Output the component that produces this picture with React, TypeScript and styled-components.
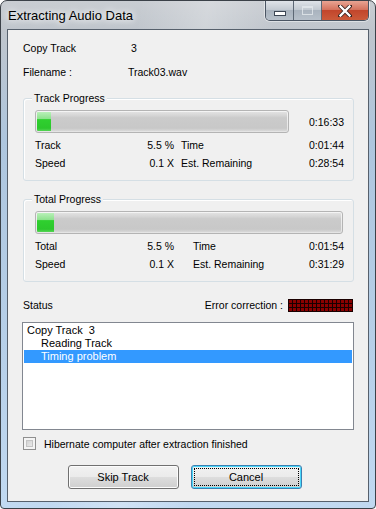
import styled, { createGlobalStyle } from "styled-components";

const GlobalStyle = createGlobalStyle`
  html, body {
    margin: 0;
    padding: 0;
    background: #ffffff;
  }
  body {
    font-family: "Liberation Sans", Arial, sans-serif;
  }
`;

const Window = styled.div`
  width: 376px;
  height: 509px;
  box-sizing: border-box;
  display: flex;
  flex-direction: column;
  border: 1px solid #3b4148;
  border-radius: 7px 7px 4px 4px;
  overflow: hidden;
  background:
    linear-gradient(100deg, rgba(255,255,255,0.0) 30%, rgba(255,255,255,0.25) 45%, rgba(255,255,255,0) 60%),
    linear-gradient(to bottom, #c9cdd2 0px, #bfc5cc 30px, #aec6de 140px, #b7d0e9 360px, #c1d9f1 100%);
`;

const TitleBar = styled.div`
  height: 29px;
  display: flex;
  align-items: flex-start;
  justify-content: space-between;
  padding-left: 7px;
`;

const Title = styled.div`
  font-family: "Liberation Sans", Arial, sans-serif;
  font-size: 13px;
  line-height: 15px;
  margin-top: 7px;
  color: #000;
  text-shadow: 0 0 6px #ffffff, 0 0 10px rgba(255,255,255,0.9);
`;

const Caption = styled.div`
  display: flex;
  margin-right: 6px;
  border: 1px solid #4a5563;
  border-top: none;
  border-radius: 0 0 5px 5px;
  overflow: hidden;
  height: 19px;
  box-shadow: 0 0 0 1px rgba(255,255,255,0.45);
`;

const CaptionButton = styled.div<{ $w: number; $close?: boolean }>`
  width: ${(p) => p.$w}px;
  height: 19px;
  display: flex;
  align-items: center;
  justify-content: center;
  border-left: 1px solid #5c6774;
  &:first-child { border-left: none; }
  background: ${(p) =>
    p.$close
      ? "linear-gradient(to bottom, #e8a493 0%, #d4735e 45%, #c2462c 50%, #cb5a3a 100%)"
      : "linear-gradient(to bottom, #dfe3e8 0%, #c3cad2 45%, #a9b3be 50%, #b7c0ca 100%)"};
`;

const MinGlyph = styled.div`
  width: 10px;
  height: 3px;
  margin-top: 6px;
  background: #fff;
  border: 1px solid #3c4654;
`;

const MaxGlyph = styled.div`
  width: 9px;
  height: 6px;
  border: 1px solid #e4e8ec;
  border-top-width: 2px;
  opacity: 0.8;
`;

const Client = styled.div`
  flex: 1;
  margin: 0 6px 6px 6px;
  border: 1px solid #56606c;
  background: #f0f0f0;
  padding: 6px 14px 12px 15px;
  display: flex;
  flex-direction: column;
  font-size: 10.5px;
  color: #000;
`;

const InfoRow = styled.div`
  height: 24px;
  display: flex;
  align-items: center;
`;

const InfoLabel = styled.div`
  width: 105px;
`;

const Group = styled.div<{ $top: number }>`
  position: relative;
  margin-top: ${(p) => p.$top}px;
  border: 1px solid #d5dfe5;
  border-radius: 3px;
  padding: 11px 9px 8px 11px;
  box-shadow: inset 1px 1px 0 #ffffff;
`;

const Legend = styled.div`
  position: absolute;
  top: -7px;
  left: 8px;
  padding: 0 2px;
  background: #f0f0f0;
  line-height: 13px;
`;

const BarRow = styled.div`
  display: flex;
  align-items: center;
  justify-content: space-between;
`;

const Bar = styled.div<{ $w?: number }>`
  box-sizing: border-box;
  ${(p) => (p.$w ? `width: ${p.$w}px;` : "flex: 1; margin-right: 1px;")}
  height: 23px;
  border: 1px solid #b4b4b4;
  border-radius: 3px;
  padding: 1px;
  background: linear-gradient(to bottom, #f4f4f4 0%, #e4e4e4 100%);
`;

const BarTrack = styled.div`
  height: 100%;
  border-radius: 1px;
  background: linear-gradient(to bottom, #e1e1e1 0%, #d4d4d4 20%, #cbcbcb 30%, #c8c8c8 85%, #d8d8d8 100%);
  overflow: hidden;
`;

const BarFill = styled.div`
  height: 100%;
  background: linear-gradient(to bottom, #b8f0b8 0%, #8ee28e 35%, #2fd02f 40%, #2cc72c 85%, #55d555 100%);
`;

const Stats = styled.div<{ $gap: number }>`
  margin-top: 3px;
  display: grid;
  grid-template-columns: 90px 49px ${(p) => p.$gap}px 1fr auto;
  grid-auto-rows: 18px;
  align-items: center;
`;

const Cell = styled.div<{ $right?: boolean; $col?: number }>`
  text-align: ${(p) => (p.$right ? "right" : "left")};
  ${(p) => (p.$col ? `grid-column: ${p.$col};` : "")}
  white-space: nowrap;
`;

const StatusRow = styled.div`
  margin-top: 15px;
  height: 16px;
  display: flex;
  align-items: center;
  justify-content: space-between;
  padding-right: 1px;
`;

const ErrorBox = styled.div`
  display: flex;
  align-items: center;
  gap: 5px;
`;

const Led = styled.div`
  width: 64px;
  height: 12px;
  background-color: #8a0000;
  background-image:
    linear-gradient(to right, #1a0000 1px, transparent 1px),
    linear-gradient(to bottom, #1a0000 1px, transparent 1px);
  background-size: 4px 4px;
  border-right: 1px solid #1a0000;
  border-bottom: 1px solid #1a0000;
`;

const ListBox = styled.div`
  margin: 9px 0 0 -1px;
  height: 108px;
  box-sizing: border-box;
  border: 1px solid #828790;
  background: #fff;
  padding: 1px;
  font-size: 11px;
`;

const ListItem = styled.div<{ $indent?: boolean; $selected?: boolean }>`
  height: 13px;
  line-height: 13px;
  padding-left: ${(p) => (p.$indent ? 17 : 3)}px;
  white-space: pre;
  background: ${(p) => (p.$selected ? "#3399ff" : "transparent")};
  color: ${(p) => (p.$selected ? "#fff" : "#000")};
`;

const CheckRow = styled.div`
  margin-top: 7px;
  height: 13px;
  display: flex;
  align-items: center;
  gap: 8px;
`;

const CheckBox = styled.div`
  width: 13px;
  height: 13px;
  box-sizing: border-box;
  border: 1px solid #8f8f8f;
  background: #f4f4f4;
  padding: 2px;
  &::after {
    content: "";
    display: block;
    width: 100%;
    height: 100%;
    background: linear-gradient(135deg, #d3d3d3 0%, #e9e9e9 100%);
    border: 1px solid #c4c4c4;
    box-sizing: border-box;
  }
`;

const ButtonRow = styled.div`
  margin-top: 15px;
  display: flex;
  justify-content: center;
  gap: 12px;
  padding-right: 8px;
`;

const Button = styled.button<{ $default?: boolean }>`
  position: relative;
  width: 111px;
  height: 24px;
  font-family: "Liberation Sans", Arial, sans-serif;
  font-size: 11px;
  color: #000;
  border: 1px solid ${(p) => (p.$default ? "#3c7fb1" : "#707070")};
  border-radius: 3px;
  background: linear-gradient(to bottom, #f2f2f2 0%, #ebebeb 48%, #dddddd 52%, #cfcfcf 100%);
  box-shadow: inset 0 0 0 1px ${(p) => (p.$default ? "#48d7fa" : "#fcfcfc")};
  padding: 0;
  outline: ${(p) => (p.$default ? "1px dotted #000" : "none")};
  outline-offset: -4px;
`;

const trackStats = { pct: 5.5, time: "0:01:44", speed: "0.1 X", remain: "0:28:54" };
const totalStats = { pct: 5.5, time: "0:01:54", speed: "0.1 X", remain: "0:31:29" };

function Progress({ pct, width }: { pct: number; width?: number }) {
  return (
    <Bar $w={width}>
      <BarTrack>
        <BarFill style={{ width: `${pct}%` }} />
      </BarTrack>
    </Bar>
  );
}

export default function App() {
  return (
    <>
      <GlobalStyle />
      <Window>
        <TitleBar>
          <Title>Extracting Audio Data</Title>
          <Caption>
            <CaptionButton $w={27}>
              <MinGlyph />
            </CaptionButton>
            <CaptionButton $w={27}>
              <MaxGlyph />
            </CaptionButton>
            <CaptionButton $w={46} $close>
              <svg width="14" height="12" viewBox="0 0 14 12">
                <path
                  d="M2 1 L12 11 M12 1 L2 11"
                  stroke="#3a2420"
                  strokeWidth="4"
                  fill="none"
                  strokeLinecap="square"
                />
                <path
                  d="M2.5 1.5 L11.5 10.5 M11.5 1.5 L2.5 10.5"
                  stroke="#ffffff"
                  strokeWidth="2.4"
                  fill="none"
                  strokeLinecap="square"
                />
              </svg>
            </CaptionButton>
          </Caption>
        </TitleBar>

        <Client>
          <InfoRow>
            <InfoLabel>Copy Track</InfoLabel>
            <div>&nbsp;3</div>
          </InfoRow>
          <InfoRow>
            <InfoLabel>Filename :</InfoLabel>
            <div>Track03.wav</div>
          </InfoRow>

          <Group $top={14}>
            <Legend>Track Progress</Legend>
            <BarRow>
              <Progress pct={trackStats.pct} width={254} />
              <Cell $right>0:16:33</Cell>
            </BarRow>
            <Stats $gap={7}>
              <Cell>Track</Cell>
              <Cell $right>{trackStats.pct} %</Cell>
              <Cell $col={4}>Time</Cell>
              <Cell $right>{trackStats.time}</Cell>
              <Cell>Speed</Cell>
              <Cell $right>{trackStats.speed}</Cell>
              <Cell $col={4}>Est. Remaining</Cell>
              <Cell $right>{trackStats.remain}</Cell>
            </Stats>
          </Group>

          <Group $top={18}>
            <Legend>Total Progress</Legend>
            <BarRow>
              <Progress pct={totalStats.pct} />
            </BarRow>
            <Stats $gap={19}>
              <Cell>Total</Cell>
              <Cell $right>{totalStats.pct} %</Cell>
              <Cell $col={4}>Time</Cell>
              <Cell $right>{totalStats.time}</Cell>
              <Cell>Speed</Cell>
              <Cell $right>{totalStats.speed}</Cell>
              <Cell $col={4}>Est. Remaining</Cell>
              <Cell $right>{totalStats.remain}</Cell>
            </Stats>
          </Group>

          <StatusRow>
            <div>Status</div>
            <ErrorBox>
              <span>Error correction :</span>
              <Led />
            </ErrorBox>
          </StatusRow>

          <ListBox>
            <ListItem>{"Copy Track  3"}</ListItem>
            <ListItem $indent>Reading Track</ListItem>
            <ListItem $indent $selected>Timing problem</ListItem>
          </ListBox>

          <CheckRow>
            <CheckBox />
            <span>Hibernate computer after extraction finished</span>
          </CheckRow>

          <ButtonRow>
            <Button>Skip Track</Button>
            <Button $default>Cancel</Button>
          </ButtonRow>
        </Client>
      </Window>
    </>
  );
}
